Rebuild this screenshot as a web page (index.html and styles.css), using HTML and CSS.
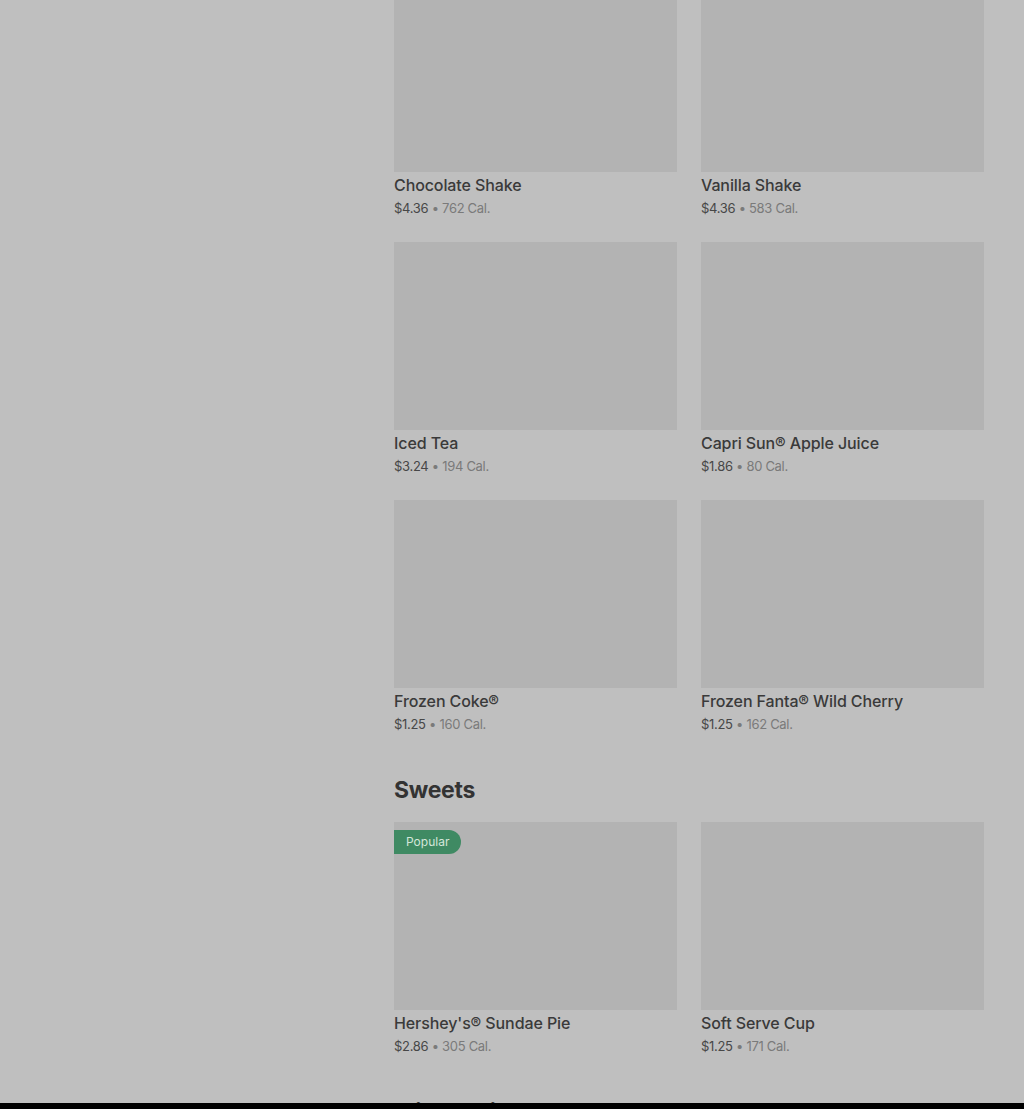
FILE: index.html
```html
<!DOCTYPE html>
<html lang="en">
<head>
  <meta charset="UTF-8">
  <meta name="viewport" content="width=device-width, initial-scale=1.0">
  <title>Menu</title>
  <link rel="stylesheet" href="styles.css">
</head>
<body>
  <div class="page">
    <aside class="sidebar"></aside>

    <main class="menu">
      <section class="section">
        <div class="grid">
          <div class="item">
            <div class="thumb"></div>
            <div class="name">Chocolate Shake</div>
            <div class="meta"><span class="price">$4.36</span> • 762 Cal.</div>
          </div>
          <div class="item">
            <div class="thumb"></div>
            <div class="name">Vanilla Shake</div>
            <div class="meta"><span class="price">$4.36</span> • 583 Cal.</div>
          </div>
          <div class="item">
            <div class="thumb"></div>
            <div class="name">Iced Tea</div>
            <div class="meta"><span class="price">$3.24</span> • 194 Cal.</div>
          </div>
          <div class="item">
            <div class="thumb"></div>
            <div class="name">Capri Sun® Apple Juice</div>
            <div class="meta"><span class="price">$1.86</span> • 80 Cal.</div>
          </div>
          <div class="item">
            <div class="thumb"></div>
            <div class="name">Frozen Coke®</div>
            <div class="meta"><span class="price">$1.25</span> • 160 Cal.</div>
          </div>
          <div class="item">
            <div class="thumb"></div>
            <div class="name">Frozen Fanta® Wild Cherry</div>
            <div class="meta"><span class="price">$1.25</span> • 162 Cal.</div>
          </div>
        </div>
      </section>

      <section class="section">
        <h2>Sweets</h2>
        <div class="grid">
          <div class="item">
            <div class="thumb">
              <span class="badge">Popular</span>
            </div>
            <div class="name">Hershey's® Sundae Pie</div>
            <div class="meta"><span class="price">$2.86</span> • 305 Cal.</div>
          </div>
          <div class="item">
            <div class="thumb"></div>
            <div class="name">Soft Serve Cup</div>
            <div class="meta"><span class="price">$1.25</span> • 171 Cal.</div>
          </div>
        </div>
      </section>

      <section class="section">
        <h2>Mixed drinks</h2>
      </section>
    </main>
  </div>

  <div class="bottom-bar"></div>
</body>
</html>
```

FILE: styles.css
```css
body {
  margin: 0;
  background: #bfbfbf;
  font-family: 'Inter', 'Noto Sans', sans-serif;
  color: #3a3a3a;
  overflow: hidden;
}
.page {
  display: flex;
  margin-top: -16px;
}
.sidebar {
  width: 394px;
  flex-shrink: 0;
}
.menu {
  width: 590px;
}
.section h2 {
  margin: 0;
  height: 64px;
  display: flex;
  align-items: center;
  font-size: 23px;
  font-weight: 700;
  color: #333;
  letter-spacing: -0.3px;
}
.grid {
  display: grid;
  grid-template-columns: 283px 283px;
  column-gap: 24px;
}
.item {
  height: 258px;
}
.thumb {
  position: relative;
  height: 188px;
  background: #b3b3b3;
}
.badge {
  position: absolute;
  top: 8px;
  left: 0;
  padding: 0 12px;
  height: 24px;
  line-height: 24px;
  font-size: 12px;
  color: #d4e6da;
  background: #3f8a63;
  border-radius: 0 12px 12px 0;
}
.name {
  margin-top: 3px;
  font-size: 16px;
  font-weight: 500;
  line-height: 20px;
  color: #3a3a3a;
  letter-spacing: -0.1px;
}
.meta {
  margin-top: 3px;
  font-size: 13px;
  line-height: 20px;
  color: #7a7a7a;
  letter-spacing: -0.3px;
}
.price {
  color: #474747;
}
.bottom-bar {
  position: fixed;
  left: 0;
  right: 0;
  bottom: 0;
  height: 6px;
  background: #000;
}
```
